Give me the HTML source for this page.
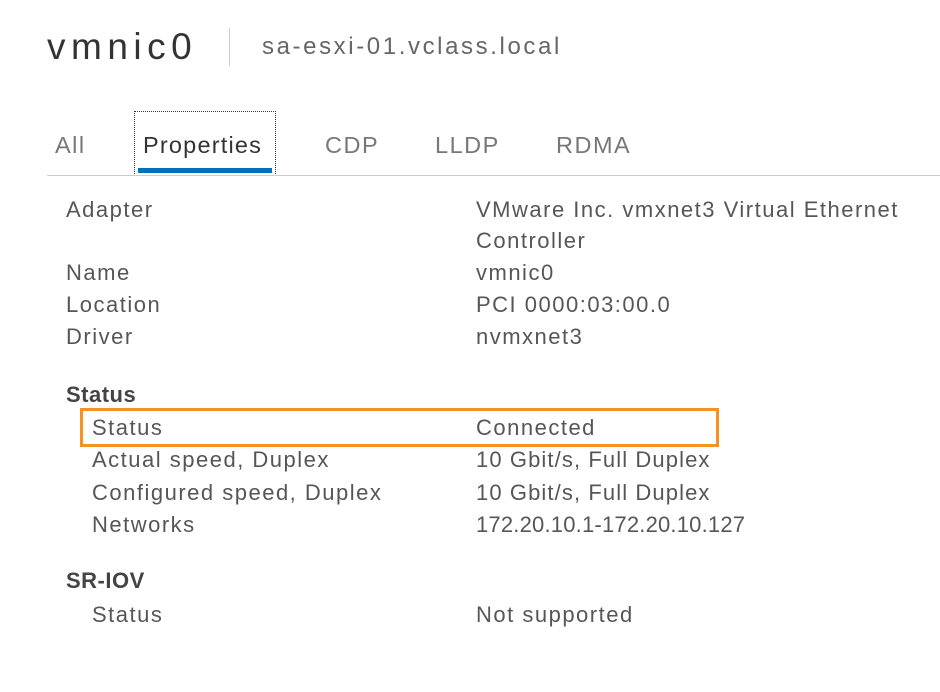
<!DOCTYPE html>
<html><head><style>
body{margin:0;width:940px;height:692px;background:#fff;position:relative;overflow:hidden;font-family:"Liberation Sans",sans-serif;color:#565656}
.a{position:absolute;white-space:nowrap;line-height:32px;font-size:22px;letter-spacing:1.5px}
</style></head><body>
<div class="a" style="left:47px;top:25px;font-size:37px;line-height:44px;color:#333;letter-spacing:5.5px">vmnic0</div>
<div style="position:absolute;left:229px;top:28px;width:1px;height:38px;background:#ccc"></div>
<div class="a" style="left:262px;top:31px;font-size:24px;color:#666;letter-spacing:2.6px">sa-esxi-01.vclass.local</div>
<div class="a" style="left:55px;top:129px;font-size:23.5px;color:#777">All</div>
<div class="a" style="left:143px;top:129px;font-size:23.5px;color:#333;letter-spacing:1.2px">Properties</div>
<div class="a" style="left:325px;top:129px;font-size:23.5px;color:#777">CDP</div>
<div class="a" style="left:435px;top:129px;font-size:23.5px;color:#777">LLDP</div>
<div class="a" style="left:556px;top:129px;font-size:23.5px;color:#777">RDMA</div>
<div style="position:absolute;left:134px;top:111px;width:140px;height:63px;border:1px dotted #333"></div>
<div style="position:absolute;left:138px;top:168px;width:134px;height:5px;background:#0072bd"></div>
<div style="position:absolute;left:47px;top:175px;width:893px;height:1px;background:#ccc"></div>

<div class="a" style="left:66px;top:194px">Adapter</div>
<div class="a" style="left:476px;top:194px">VMware Inc. vmxnet3 Virtual Ethernet</div>
<div class="a" style="left:476px;top:225px">Controller</div>
<div class="a" style="left:66px;top:257px">Name</div><div class="a" style="left:476px;top:257px">vmnic0</div>
<div class="a" style="left:66px;top:289px">Location</div><div class="a" style="left:476px;top:289px">PCI 0000:03:00.0</div>
<div class="a" style="left:66px;top:321px">Driver</div><div class="a" style="left:476px;top:321px">nvmxnet3</div>
<div class="a" style="left:66px;top:379px;font-weight:bold;color:#444;letter-spacing:0.5px">Status</div>
<div style="position:absolute;left:80px;top:408px;width:633px;height:33px;border:3px solid #f5931e"></div>
<div class="a" style="left:92px;top:412px">Status</div><div class="a" style="left:476px;top:412px">Connected</div>
<div class="a" style="left:92px;top:444px">Actual speed, Duplex</div><div class="a" style="left:476px;top:444px;letter-spacing:1.1px">10 Gbit/s, Full Duplex</div>
<div class="a" style="left:92px;top:477px">Configured speed, Duplex</div><div class="a" style="left:476px;top:477px;letter-spacing:1.1px">10 Gbit/s, Full Duplex</div>
<div class="a" style="left:92px;top:509px">Networks</div><div class="a" style="left:476px;top:509px;letter-spacing:0.2px">172.20.10.1-172.20.10.127</div>
<div class="a" style="left:66px;top:565px;font-weight:bold;color:#444;letter-spacing:0.5px">SR-IOV</div>
<div class="a" style="left:92px;top:599px">Status</div><div class="a" style="left:476px;top:599px">Not supported</div>
</body></html>
